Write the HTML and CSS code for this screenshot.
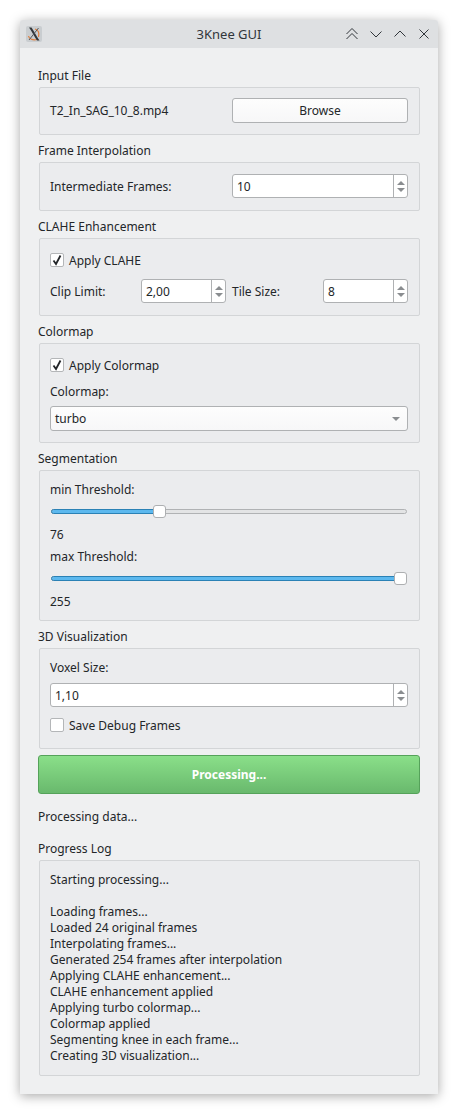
FILE: index.html
```html
<!DOCTYPE html>
<html lang="en">
<head>
    <meta charset="UTF-8">
    <meta name="viewport" content="width=device-width, initial-scale=1.0">
    <title>3Knee GUI</title>
    <link rel="stylesheet" href="styles.css">
</head>
<body>
    <div class="window">
        <div class="titlebar">
            <svg class="app-icon" width="16" height="16" viewBox="0 0 16 16">
                <rect width="16" height="16" rx="2" fill="#c9cdd0"/>
                <path d="M2.500 10c.5 3.500 5 4.500 8.500 3.500M9 3c3 1 4.500 4 3.500 8" stroke="#e0803f" stroke-width="1.200" fill="none"/>
                <path d="M3 1.500h2.500c2.500 4 5 8.500 8 13h-2.500c-2.500-4-5-8.500-8-13z" fill="#33363a"/>
                <path d="M12.500 2L3 14" stroke="#55585c" stroke-width="1" fill="none"/>
            </svg>
            <div class="title">3Knee GUI</div>
            <div class="title-buttons">
                <svg width="14" height="14" viewBox="0 0 14 14"><path d="M1.500 7L7 1.500 12.500 7M1.500 12L7 6.500 12.500 12" fill="none" stroke="#31363b"/></svg>
                <svg width="14" height="14" viewBox="0 0 14 14"><path d="M1.500 4.500L7 10l5.500-5.500" fill="none" stroke="#31363b"/></svg>
                <svg width="14" height="14" viewBox="0 0 14 14"><path d="M1.500 9.500L7 4l5.500 5.500" fill="none" stroke="#31363b"/></svg>
                <svg width="14" height="14" viewBox="0 0 14 14"><path d="M2.500 2.500l9 9M11.500 2.500l-9 9" fill="none" stroke="#31363b"/></svg>
            </div>
        </div>
        <div class="content">
            <div class="group-title">Input File</div>
            <div class="group two-col file-row">
                <span>T2_In_SAG_10_8.mp4</span>
                <button class="btn">Browse</button>
            </div>

            <div class="group-title">Frame Interpolation</div>
            <div class="group two-col interp">
                <span>Intermediate Frames:</span>
                <div class="spin"><span class="spin-value">10</span><div class="spin-arrows"><i class="up"></i><i class="down"></i></div></div>
            </div>

            <div class="group-title">CLAHE Enhancement</div>
            <div class="group clahe">
                <label class="check"><span class="box"><svg width="12" height="12" viewBox="0 0 12 12"><path d="M2.500 6.500L5 10l4.500-8.500" fill="none" stroke="#232629" stroke-width="1.800"/></svg></span>Apply CLAHE</label>
                <div class="four-col">
                    <span>Clip Limit:</span>
                    <div class="spin"><span class="spin-value">2,00</span><div class="spin-arrows"><i class="up"></i><i class="down"></i></div></div>
                    <span>Tile Size:</span>
                    <div class="spin"><span class="spin-value">8</span><div class="spin-arrows"><i class="up"></i><i class="down"></i></div></div>
                </div>
            </div>

            <div class="group-title">Colormap</div>
            <div class="group colormap">
                <label class="check"><span class="box"><svg width="12" height="12" viewBox="0 0 12 12"><path d="M2.500 6.500L5 10l4.500-8.500" fill="none" stroke="#232629" stroke-width="1.800"/></svg></span>Apply Colormap</label>
                <span>Colormap:</span>
                <div class="combo"><span>turbo</span><i class="down"></i></div>
            </div>

            <div class="group-title">Segmentation</div>
            <div class="group segmentation">
                <span>min Threshold:</span>
                <div class="slider"><div class="groove"><div class="fill" style="width: 29%"></div></div><div class="handle" style="left: 103px"></div></div>
                <span class="slider-value">76</span>
                <span>max Threshold:</span>
                <div class="slider"><div class="groove"><div class="fill" style="width: 100%"></div></div><div class="handle" style="left: 344px"></div></div>
                <span class="slider-value">255</span>
            </div>

            <div class="group-title">3D Visualization</div>
            <div class="group voxel">
                <span>Voxel Size:</span>
                <div class="spin"><span class="spin-value">1,10</span><div class="spin-arrows"><i class="up"></i><i class="down"></i></div></div>
                <label class="check"><span class="box"></span>Save Debug Frames</label>
            </div>

            <button class="run-btn">Processing...</button>
            <div class="status">Processing data...</div>

            <div class="group-title">Progress Log</div>
            <div class="group log">Starting processing...

Loading frames...
Loaded 24 original frames
Interpolating frames...
Generated 254 frames after interpolation
Applying CLAHE enhancement...
CLAHE enhancement applied
Applying turbo colormap...
Colormap applied
Segmenting knee in each frame...
Creating 3D visualization...</div>
        </div>
    </div>
</body>
</html>
```

FILE: styles.css
```css
body {
    font-family: "Noto Sans", sans-serif;
    font-size: 12px;
    line-height: 18px;
    margin: 0;
    padding: 20px;
    background: #fff;
    color: #232629;
}

.window {
    width: 418px;
    height: 1074px;
    background: #eff0f1;
    border-radius: 3px 3px 0 0;
    box-shadow: 0 2px 12px rgba(0, 0, 0, 0.35);
}

.titlebar {
    display: flex;
    align-items: center;
    height: 28px;
    padding: 0 7px 0 6px;
    background: #dee0e2;
    border-radius: 3px 3px 0 0;
}

.app-icon {
    flex: none;
}

.title {
    flex: 1;
    text-align: center;
    font-size: 13px;
    line-height: 16px;
    color: #31363b;
    padding-left: 71px;
}

.title-buttons {
    display: flex;
    gap: 10px;
}

.content {
    padding: 19px 18px 0 18px;
}

/* text rows are 16px tall, the taller line-height only sets the baseline */
.group-title,
.group > span,
.four-col > span,
.check,
.status {
    height: 16px;
}

.group-title {
    margin-bottom: 4px;
}

.group {
    background: #ebecee;
    border: 1px solid #d3d5d7;
    border-radius: 2px;
    padding: 10px 11px 11px 10px;
    margin: 0 0 7px 1px;
    width: 358px;
}

.two-col {
    display: grid;
    grid-template-columns: 1fr 1fr;
    column-gap: 6px;
    align-items: center;
}

.file-row > span {
    line-height: 16px;
}

.interp {
    padding-top: 11px;
    padding-bottom: 12px;
}

.four-col {
    display: grid;
    grid-template-columns: repeat(4, 85px);
    column-gap: 6px;
    align-items: center;
}

.clahe {
    display: flex;
    flex-direction: column;
    gap: 11px;
    padding-top: 13px;
    padding-bottom: 12px;
}

.colormap {
    display: flex;
    flex-direction: column;
    gap: 7px;
    padding-top: 13px;
}

.colormap .check {
    margin-bottom: 3px;
}

.segmentation {
    display: flex;
    flex-direction: column;
    gap: 6px;
}

.slider-value {
    margin-top: 1px;
}

.voxel {
    display: flex;
    flex-direction: column;
    gap: 8px;
    padding-bottom: 15px;
}

.voxel .check {
    margin-top: 2px;
}

.btn {
    height: 25px;
    font: inherit;
    line-height: 16px;
    color: inherit;
    background: linear-gradient(#fdfdfd, #f7f7f8);
    border: 1px solid #afb1b3;
    border-radius: 3px;
}

.spin {
    display: flex;
    height: 24px;
    background: #fff;
    border: 1px solid #afb1b3;
    border-radius: 3px;
    box-sizing: border-box;
}

.spin-value {
    flex: 1;
    padding-left: 4px;
    line-height: 24px;
}

.spin-arrows {
    width: 13px;
    display: flex;
    flex-direction: column;
    align-items: center;
    justify-content: center;
    gap: 3px;
    border-left: 1px solid #afb1b3;
}

.up {
    border: 4px solid transparent;
    border-top: 0;
    border-bottom: 4px solid #8a8d90;
}

.down {
    border: 4px solid transparent;
    border-bottom: 0;
    border-top: 4px solid #8a8d90;
}

.check {
    display: flex;
    gap: 5px;
}

.box {
    width: 12px;
    height: 12px;
    margin-top: 1px;
    background: #fff;
    border: 1px solid #b4b6b8;
    border-radius: 2px;
}

.box svg {
    display: block;
}

.combo {
    display: flex;
    align-items: center;
    justify-content: space-between;
    height: 25px;
    box-sizing: border-box;
    padding: 0 7px 0 4px;
    line-height: 16px;
    background: linear-gradient(#fdfdfd, #f7f7f8);
    border: 1px solid #afb1b3;
    border-radius: 3px;
}

.slider {
    position: relative;
    height: 16px;
    padding: 6px 1px 0;
    box-sizing: border-box;
}

.groove {
    height: 5px;
    background: #e3e4e5;
    border: 1px solid #b0b2b4;
    border-radius: 3px;
    box-sizing: border-box;
}

.fill {
    height: 3px;
    background: #5cb8ee;
    outline: 1px solid #2a81b5;
    border-radius: 2px;
}

.handle {
    position: absolute;
    top: 2px;
    width: 11px;
    height: 11px;
    background: #fff;
    border: 1px solid #adafb1;
    border-radius: 3px;
}

.run-btn {
    display: block;
    width: 382px;
    height: 39px;
    margin: -1px 0 0 0;
    font: inherit;
    font-weight: bold;
    line-height: 16px;
    color: #fff;
    background: linear-gradient(#8adf89, #69b96d);
    border: 1px solid #55a25a;
    border-radius: 3px;
}

.status {
    margin: 14px 0 16px;
}

.log {
    white-space: pre-line;
    line-height: 16px;
    padding: 11px 11px 12px 10px;
    height: 191px;
    margin-bottom: 0;
}
```
